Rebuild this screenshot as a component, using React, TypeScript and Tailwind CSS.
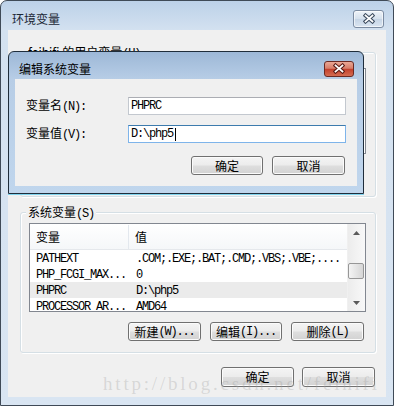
import type { ReactNode } from "react";

const M = ({ children }: { children: ReactNode }) => (
  <span className="font-['Liberation_Mono',monospace] tracking-[-1.2px]">{children}</span>
);

const Btn = ({ children, className = "" }: { children: ReactNode; className?: string }) => (
  <div
    className={`flex items-center justify-center rounded-[3px] border border-[#707070] bg-[linear-gradient(180deg,#f4f4f4_0%,#ececec_48%,#dedede_52%,#d2d2d2_100%)] shadow-[inset_0_0_0_1px_#fbfbfb] leading-none ${className}`}
  >
    {children}
  </div>
);

const XGlyph = ({ outline }: { outline: string }) => (
  <svg width="14" height="11" viewBox="0 0 14 11">
    <path d="M3.5 2.5 L10.5 8.5 M10.5 2.5 L3.5 8.5" stroke={outline} strokeWidth="3.8" strokeLinecap="square" fill="none" />
    <path d="M3.5 2.5 L10.5 8.5 M10.5 2.5 L3.5 8.5" stroke="#ffffff" strokeWidth="1.7" strokeLinecap="square" fill="none" />
  </svg>
);

const Group = ({ label, className = "", children }: { label: ReactNode; className?: string; children?: ReactNode }) => (
  <div className={`relative rounded-[3px] border border-[#d5dfe5] shadow-[inset_1px_1px_0_#ffffff,1px_1px_0_#ffffff] ${className}`}>
    <span className="absolute left-[5px] top-[-8px] bg-[#f0f0f0] px-[2px] leading-[14px]">{label}</span>
    {children}
  </div>
);

type Row = { name: string; value: string; sel?: boolean };

const rows: Row[] = [
  { name: "PATHEXT", value: ".COM;.EXE;.BAT;.CMD;.VBS;.VBE;...." },
  { name: "PHP_FCGI_MAX...", value: "0" },
  { name: "PHPRC", value: "D:\\php5", sel: true },
  { name: "PROCESSOR_AR...", value: "AMD64" },
];

const Arrow = ({ up }: { up?: boolean }) => (
  <div className="flex h-[17px] items-center justify-center">
    <svg width="7" height="4" viewBox="0 0 7 4">
      <path d={up ? "M0 4 L3.5 0 L7 4 Z" : "M0 0 L7 0 L3.5 4 Z"} fill="#5a5a5a" />
    </svg>
  </div>
);

const ButtonRow = () => (
  <div className="mr-[2px] flex justify-end gap-[9px]">
    <Btn className="h-[19px] w-[73px]">
      新建<M>(W)...</M>
    </Btn>
    <Btn className="h-[19px] w-[72px]">
      编辑<M>(I)...</M>
    </Btn>
    <Btn className="h-[19px] w-[73px]">
      删除<M>(L)</M>
    </Btn>
  </div>
);

const EditDialog = () => (
  <div className="absolute left-[7px] top-[50px] z-10 flex h-[143px] w-[356px] flex-col rounded-t-[6px] border border-[#1f2d3b] bg-[linear-gradient(180deg,#9db8d7_0px,#b7cde6_27px,#c0d6ed_100%)] shadow-[0_1px_0_#7fd3ee]">
    <div className="flex h-[27px] items-center justify-between pl-[10px] pr-[9px] pt-[6px]">
      <span className="leading-none text-black">编辑系统变量</span>
      <div className="flex h-[16px] w-[30px] items-center justify-center rounded-[3px] border border-[#6b2a23] bg-[linear-gradient(180deg,#eaa896_0%,#d77d69_45%,#c3412d_52%,#d46c52_100%)]">
        <XGlyph outline="#5a1c16" />
      </div>
    </div>
    <div className="mx-[6px] h-[107px] bg-[#f0f0f0] px-[11px] pt-[18px]">
      <div className="flex h-[18px] items-center">
        <span className="w-[102px] leading-none">
          变量名<M>(N):</M>
        </span>
        <div className="flex h-[18px] w-[218px] items-center border border-[#c3c8cf] border-t-[#abadb3] bg-white pl-[2px] leading-none">
          <M>PHPRC</M>
        </div>
      </div>
      <div className="mt-[10px] flex h-[18px] items-center">
        <span className="w-[102px] leading-none">
          变量值<M>(V):</M>
        </span>
        <div className="flex h-[18px] w-[218px] items-center border border-[#7eb4ea] border-t-[#3d7bad] bg-white pl-[2px] leading-none">
          <M>D:\php5</M>
          <span className="ml-[2px] h-[13px] w-px bg-black" />
        </div>
      </div>
      <div className="mr-[1px] mt-[13px] flex justify-end gap-[9px]">
        <Btn className="h-[19px] w-[72px] border-[#3c7fb1] shadow-[inset_0_0_0_1px_#a6e0f7]">确定</Btn>
        <Btn className="h-[19px] w-[73px]">取消</Btn>
      </div>
    </div>
  </div>
);

export default function App() {
  return (
    <div className="relative h-[406px] w-[394px] overflow-hidden rounded-t-[7px] border border-[#3f4a57] bg-[linear-gradient(180deg,#bcd1e8_0px,#d3e1f0_29px,#d9e5f2_100%)] font-['Noto_Sans_CJK_SC','Noto_Sans',sans-serif] text-[12px] text-black">
      <div className="flex h-[29px] items-center justify-between pl-[11px] pr-[9px] pt-[6px]">
        <span className="leading-none text-[#1b2735]">环境变量</span>
        <div className="flex h-[18px] w-[31px] items-center justify-center rounded-[3px] border border-[#7b8ba1] bg-[linear-gradient(180deg,#eef3f9_0%,#d6e1ed_48%,#c6d5e6_52%,#dae5f1_100%)] shadow-[inset_0_0_0_1px_rgba(255,255,255,0.6)]">
          <XGlyph outline="#3e4d60" />
        </div>
      </div>

      <div className="mx-[7px] flex h-[367px] flex-col bg-[#f0f0f0] pl-[12px] pr-[10px] pt-[22px]">
        <Group label={<>feihifi 的用户变量<M>(U)</M></>} className="h-[145px] pl-[8px] pr-[9px] pt-[15px]">
          <div className="h-[86px] border border-[#828790] bg-white" />
          <div className="mt-[13px]">
            <ButtonRow />
          </div>
        </Group>

        <Group label={<>系统变量<M>(S)</M></>} className="mt-[15px] h-[141px] pl-[8px] pr-[9px] pt-[10px]">
          <div className="flex h-[89px] overflow-hidden border border-[#828790] bg-white">
            <div className="flex flex-1 flex-col">
              <div className="flex h-[26px] shrink-0 items-center border-b border-[#e5e8ec] bg-[linear-gradient(180deg,#ffffff,#f5f7f9)]">
                <span className="w-[99px] border-r border-[#e3e8ee] pl-[6px] leading-[24px]">变量</span>
                <span className="pl-[6px] leading-[24px]">值</span>
              </div>
              {rows.map((r) => (
                <div key={r.name} className={`flex h-[16px] shrink-0 items-center leading-none ${r.sel ? "bg-[#ebebeb]" : ""}`}>
                  <span className="w-[100px] pl-[6px]">
                    <M>{r.name}</M>
                  </span>
                  <span className="pl-[6px]">
                    <M>{r.value}</M>
                  </span>
                </div>
              ))}
            </div>
            <div className="relative flex w-[18px] flex-col justify-between border-l border-[#f0f0f0] bg-[linear-gradient(90deg,#ececec,#f8f8f8)]">
              <Arrow up />
              <div className="absolute left-0 top-[39px] h-[16px] w-[16px] rounded-[2px] border border-[#979797] bg-[linear-gradient(90deg,#f4f4f4,#e2e2e2_60%,#d6d6d6)]" />
              <Arrow />
            </div>
          </div>
          <div className="mt-[10px]">
            <ButtonRow />
          </div>
        </Group>

        <div className="mr-[1px] mt-[14px] flex justify-end gap-[8px]">
          <Btn className="h-[20px] w-[73px]">确定</Btn>
          <Btn className="h-[20px] w-[73px]">取消</Btn>
        </div>
      </div>

      <EditDialog />

      <div className="pointer-events-none absolute left-[102px] top-[372px] z-20 whitespace-nowrap font-['Liberation_Serif',serif] text-[19px] leading-[22px] tracking-[2.8px] text-[rgba(160,160,160,0.32)]">
        http://blog.csdn.net/feihifi
      </div>
    </div>
  );
}
